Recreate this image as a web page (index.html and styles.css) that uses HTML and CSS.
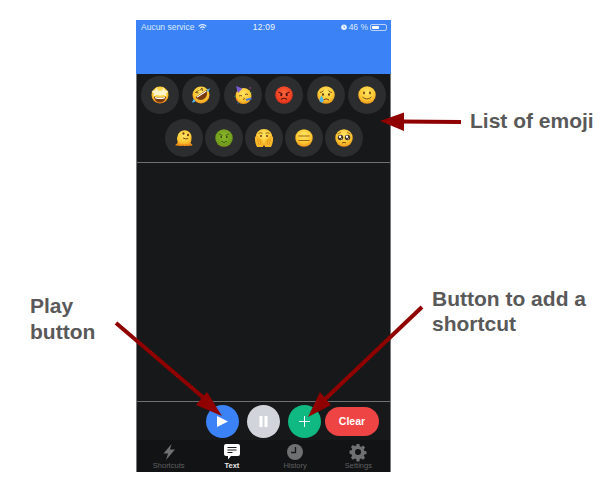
FILE: index.html
```html
<!DOCTYPE html>
<html lang="en">
<head>
<meta charset="utf-8">
<title>Emoji shortcuts</title>
<link rel="stylesheet" href="styles.css">
</head>
<body>
<svg class="defs" aria-hidden="true">
  <defs>
    <radialGradient id="gold" cx="50%" cy="35%" r="70%"><stop offset="0" stop-color="#ffe565"/><stop offset=".6" stop-color="#fdc834"/><stop offset="1" stop-color="#f08c14"/></radialGradient>
    <radialGradient id="red" cx="50%" cy="40%" r="65%"><stop offset="0" stop-color="#f9673a"/><stop offset=".7" stop-color="#ee3f22"/><stop offset="1" stop-color="#d62a12"/></radialGradient>
    <radialGradient id="green" cx="50%" cy="40%" r="65%"><stop offset="0" stop-color="#8db52b"/><stop offset=".8" stop-color="#6f9c1d"/><stop offset="1" stop-color="#b29a1e"/></radialGradient>
    <symbol id="starstruck" viewBox="0 0 36 36">
      <circle cx="18" cy="18" r="17" fill="url(#gold)"/>
      <path d="M1 10 8 9l3-6 3 6 4 1 4-1 3-6 3 6 7 1-5 5 1 6-6-3-7 1-7-1-6 3 1-6z" fill="#fff3c8"/>
      <path d="M6 21c7 3 17 3 24 0-1 8-6 12-12 12S7 29 6 21z" fill="#7a3a10"/>
      <path d="M8 22c6 2 14 2 20 0l-.6 3c-6 1.500-13 1.500-18.800 0z" fill="#fff"/>
    </symbol>
    <symbol id="rofl" viewBox="0 0 36 36">
      <circle cx="18" cy="18" r="17" fill="url(#gold)"/>
      <path d="M7 22 29 8c3 7 0 15-5 18s-13 3-17-4z" fill="#7a3a10"/>
      <path d="M9 21.500 28 9.500l.8 2.200-18 11.300z" fill="#fff"/>
      <path d="m7 13 6-4M7 13l6 1M20 4l1 6M20 4l-4 5" stroke="#6a3a10" stroke-width="1.800" fill="none"/>
      <path d="M29 7q5-1 7-3-1 5-4 8zM3 26q-2 4-3 7 5 0 7-3z" fill="#54b6ee"/>
    </symbol>
    <symbol id="party" viewBox="0 0 36 36">
      <circle cx="19" cy="20" r="16" fill="url(#gold)"/>
      <path d="M4 0l13 5-9 9z" fill="#7c5cd6"/>
      <path d="M10 20q3-2 6 0M22 17q3-2 6 0" stroke="#6a3a10" stroke-width="1.800" fill="none"/>
      <path d="M18 27q3 0 3-1.500T19 24" stroke="#6a3a10" stroke-width="1.500" fill="none"/>
      <path d="m23 26 12-3 0 4-10 3z" fill="#4778d8"/>
      <circle cx="5" cy="28" r="1.500" fill="#d83a55"/><circle cx="8" cy="34" r="1.300" fill="#3f7de0"/><circle cx="32" cy="4" r="1.500" fill="#c73fb0"/><circle cx="34" cy="13" r="1.200" fill="#4aa84a"/><circle cx="2" cy="21" r="1.200" fill="#4aa84a"/>
    </symbol>
    <symbol id="angry" viewBox="0 0 36 36">
      <circle cx="18" cy="18" r="17.500" fill="url(#red)"/>
      <path d="m7 12 8 4M29 12l-8 4" stroke="#5b1608" stroke-width="2.400"/>
      <ellipse cx="12.500" cy="18" rx="2" ry="2.400" fill="#4a1208"/><ellipse cx="23.500" cy="18" rx="2" ry="2.400" fill="#4a1208"/>
      <path d="M12 27q6-5 12 0" stroke="#5b1608" stroke-width="2.200" fill="none"/>
    </symbol>
    <symbol id="cry" viewBox="0 0 36 36">
      <circle cx="18" cy="18" r="17.500" fill="url(#gold)"/>
      <path d="M6 13q4 0 7-4M30 13q-4 0-7-4" stroke="#7a4a10" stroke-width="1.800" fill="none"/>
      <ellipse cx="12" cy="17" rx="2" ry="2.400" fill="#5a3210"/><ellipse cx="24" cy="17" rx="2" ry="2.400" fill="#5a3210"/>
      <path d="M13 28q5-5 11 0" stroke="#6a3a10" stroke-width="2" fill="none"/>
      <path d="M9 19q-4 7-4 10a4 4 0 0 0 8 0q0-3-4-10z" fill="#4fb4e8"/>
    </symbol>
    <symbol id="smile" viewBox="0 0 36 36">
      <circle cx="18" cy="18" r="17.500" fill="url(#gold)"/>
      <ellipse cx="12" cy="14" rx="2" ry="2.800" fill="#7a4a10"/><ellipse cx="24" cy="14" rx="2" ry="2.800" fill="#7a4a10"/>
      <path d="M9 22q9 8 18 0" stroke="#7a4a10" stroke-width="1.800" fill="none"/>
    </symbol>
    <symbol id="melt" viewBox="0 0 36 36">
      <path d="M5 15a14 14 0 1 1 28 3c0 5-1 8-2 10l4 4q0 2-6 1-3 2-6 0-3 2-7 0l-3 1-11-1q-3 0 1-3 3-2 2-6-2-4 0-9z" fill="url(#gold)"/>
      <ellipse cx="17" cy="9" rx="2" ry="2.400" fill="#6a3a10"/><ellipse cx="26" cy="12" rx="2" ry="2.400" fill="#6a3a10"/>
      <path d="M16 18q5 3 10 1" stroke="#6a3a10" stroke-width="1.800" fill="none"/>
      <path d="M4 30q11 3 28 1" stroke="#f28a16" stroke-width="1.600" fill="none"/>
    </symbol>
    <symbol id="sick" viewBox="0 0 36 36">
      <circle cx="18" cy="18" r="17.500" fill="url(#green)"/>
      <path d="m8 10 7 3M28 10l-7 3" stroke="#3f5c10" stroke-width="1.800"/>
      <ellipse cx="12.500" cy="16" rx="1.800" ry="2.200" fill="#33480c"/><ellipse cx="23.500" cy="16" rx="1.800" ry="2.200" fill="#33480c"/>
      <path d="M12 26q2-3 4 0t4 0 4 0" stroke="#3f5c10" stroke-width="1.800" fill="none"/>
    </symbol>
    <symbol id="hands" viewBox="0 0 36 36">
      <circle cx="18" cy="17" r="17" fill="url(#gold)"/>
      <path d="M7 9q4-3 8 0M21 9q4-3 8 0" stroke="#8a5a14" stroke-width="1.800" fill="none"/>
      <ellipse cx="12" cy="14" rx="2" ry="2.200" fill="#6a3a10"/><ellipse cx="24" cy="14" rx="2" ry="2.200" fill="#6a3a10"/>
      <path d="M0 16q5-4 8 0l8 8v12H4q-5-9-4-20zM36 16q-5-4-8 0l-8 8v12h12q5-9 4-20z" fill="#f8b92c"/>
      <path d="M5 20l3 12M10 21l2 11M31 20l-3 12M26 21l-2 11" stroke="#d98a14" stroke-width="1.300" fill="none"/>
    </symbol>
    <symbol id="blank" viewBox="0 0 36 36">
      <circle cx="18" cy="18" r="17.500" fill="url(#gold)"/>
      <path d="M7 14h22M7 23h22" stroke="#9a6414" stroke-width="2.200"/>
    </symbol>
    <symbol id="plead" viewBox="0 0 36 36">
      <circle cx="18" cy="18" r="17.500" fill="url(#gold)"/>
      <path d="M5 10q4-1 7-4M31 10q-4-1-7-4" stroke="#8a5a14" stroke-width="1.600" fill="none"/>
      <circle cx="11" cy="17" r="5.500" fill="#4a3424"/><circle cx="25" cy="17" r="5.500" fill="#4a3424"/>
      <circle cx="10" cy="15.500" r="2.400" fill="#fff"/><circle cx="24" cy="15.500" r="2.400" fill="#fff"/>
      <circle cx="13" cy="19.500" r="1.200" fill="#d8d8d8"/><circle cx="27" cy="19.500" r="1.200" fill="#d8d8d8"/>
      <path d="M14 28q4-3 8 0" stroke="#6a3a10" stroke-width="1.800" fill="none"/>
    </symbol>
  </defs>
</svg>

<main class="stage">
  <section class="phone">
    <header class="header">
      <div class="status">
        <div class="status-side">
          <span>Aucun service</span>
          <svg class="wifi" viewBox="0 0 10 7"><path d="M0 2.200a7 7 0 0 1 10 0L9 3.200a5.600 5.600 0 0 0-8 0zM2 4.200a4.200 4.200 0 0 1 6 0L7 5.200a2.800 2.800 0 0 0-4 0zM3.800 6a1.700 1.700 0 0 1 2.400 0L5 7z"/></svg>
        </div>
        <div class="status-time">12:09</div>
        <div class="status-side status-right">
          <svg class="alarm" viewBox="0 0 8 8"><circle cx="4" cy="4.300" r="3.700"/><path d="M4 2v2.300l1.500.8" stroke="#3b82f6" stroke-width=".8" fill="none"/></svg>
          <span>46 %</span>
          <span class="battery"><span class="battery-level"></span></span>
        </div>
      </div>
    </header>

    <div class="emoji-list">
      <div class="emoji-row emoji-row-wide">
        <div class="emoji-chip"><svg class="emoji"><use href="#starstruck"/></svg></div>
        <div class="emoji-chip"><svg class="emoji"><use href="#rofl"/></svg></div>
        <div class="emoji-chip"><svg class="emoji"><use href="#party"/></svg></div>
        <div class="emoji-chip"><svg class="emoji"><use href="#angry"/></svg></div>
        <div class="emoji-chip"><svg class="emoji"><use href="#cry"/></svg></div>
        <div class="emoji-chip"><svg class="emoji"><use href="#smile"/></svg></div>
      </div>
      <div class="emoji-row">
        <div class="emoji-chip"><svg class="emoji"><use href="#melt"/></svg></div>
        <div class="emoji-chip"><svg class="emoji"><use href="#sick"/></svg></div>
        <div class="emoji-chip"><svg class="emoji"><use href="#hands"/></svg></div>
        <div class="emoji-chip"><svg class="emoji"><use href="#blank"/></svg></div>
        <div class="emoji-chip"><svg class="emoji"><use href="#plead"/></svg></div>
      </div>
    </div>

    <div class="text-area"></div>

    <div class="controls">
      <div class="round-buttons">
        <button class="round round-play"><svg class="glyph" viewBox="0 0 11 11"><path d="M0 0l11 5.500L0 11z"/></svg></button>
        <button class="round round-pause"><svg class="glyph" viewBox="0 0 11 11"><path d="M1.500 0h3v11h-3zM6.500 0h3v11h-3z"/></svg></button>
        <button class="round round-add"><svg class="glyph" viewBox="0 0 11 11"><path d="M5 0h1v5h5v1H6v5H5V6H0V5h5z"/></svg></button>
      </div>
      <button class="clear">Clear</button>
    </div>

    <nav class="tabs">
      <div class="tab">
        <svg class="tab-icon" viewBox="0 0 16 16"><path d="M10.500 0 2.500 9.500h4.500L5 16l9-10.500H9z"/></svg>
        <span>Shortcuts</span>
      </div>
      <div class="tab tab-active">
        <svg class="tab-icon" viewBox="0 0 16 16"><path d="M2 0h12q2 0 2 2v8q0 2-2 2H7l-3 3.500V12H2q-2 0-2-2V2q0-2 2-2z"/><path d="M3.500 3.500h9M3.500 6h9M3.500 8.500h5" stroke="#17181a" stroke-width="1.100"/></svg>
        <span>Text</span>
      </div>
      <div class="tab">
        <svg class="tab-icon" viewBox="0 0 16 16"><circle cx="8" cy="8" r="8"/><path d="M8.500 3v5.500H4" stroke="#17181a" stroke-width="1.300" fill="none"/></svg>
        <span>History</span>
      </div>
      <div class="tab">
        <svg class="tab-icon" viewBox="0 0 16 16"><path d="M6.600 0h2.800l.4 2.300 1.300.6 2-1.300 2 2-1.300 2 .6 1.300 2.100.4v2.800l-2.100.4-.6 1.300 1.300 2-2 2-2-1.300-1.300.6-.4 2.300H6.600l-.4-2.300-1.300-.6-2 1.300-2-2 1.300-2-.6-1.300L-.5 9.400V6.600l2.100-.4.600-1.300-1.300-2 2-2 2 1.300 1.300-.6zM8 5a3 3 0 1 0 0 6 3 3 0 0 0 0-6z" fill-rule="evenodd"/></svg>
        <span>Settings</span>
      </div>
    </nav>
  </section>

  <p class="note note-list">List of emoji</p>
  <p class="note note-play">Play<br>button</p>
  <p class="note note-add">Button to add a<br>shortcut</p>

  <svg class="arrows" viewBox="0 0 604 484" aria-hidden="true">
    <path class="arrow-line" d="M461 122 400 121.500"/>
    <path class="arrow-head" d="M380 121 404 112.500 404 131z"/>
    <path class="arrow-line" d="M116 323 212 405"/>
    <path class="arrow-head" d="M222 416 196 405 207 392z"/>
    <path class="arrow-line" d="M422 307 320 404"/>
    <path class="arrow-head" d="M308 417 320 392 331 405z"/>
  </svg>
</main>
</body>
</html>
```

FILE: styles.css
```css
* { box-sizing: border-box; }

html, body {
  margin: 0;
  padding: 0;
  background: #fff;
}

.defs {
  position: absolute;
  width: 0;
  height: 0;
}

.stage {
  position: relative;
  width: 604px;
  height: 484px;
  overflow: hidden;
  font-family: "Liberation Sans", Arial, sans-serif;
}

.phone {
  position: absolute;
  left: 136px;
  top: 20px;
  width: 255px;
  height: 452px;
  display: flex;
  flex-direction: column;
  background: #17181a;
  border-left: 1px solid #77787a;
  border-right: 1px solid #77787a;
}

.header {
  height: 54px;
  flex: none;
  background: #3b82f6;
  margin: 0 -1px;
}

.status {
  height: 14px;
  padding: 0 4px 0 5px;
  display: grid;
  grid-template-columns: 1fr auto 1fr;
  align-items: center;
  color: #dbe8fd;
  font-size: 8.500px;
}

.status-side {
  display: flex;
  align-items: center;
  gap: 4px;
}

.status-right {
  justify-content: flex-end;
  gap: 2px;
}

.status-time {
  font-size: 8.500px;
  letter-spacing: .2px;
  color: #eef4ff;
}

.wifi {
  width: 9px;
  height: 6px;
  fill: #eef4ff;
}

.alarm {
  width: 6px;
  height: 6px;
  fill: #eef4ff;
}

.battery {
  width: 17px;
  height: 7px;
  padding: 1px;
  border: 1px solid #b8d0fa;
  border-radius: 2px;
  display: block;
}

.battery-level {
  display: block;
  width: 7px;
  height: 100%;
  background: #fff;
  border-radius: 1px;
}

.emoji-list {
  flex: none;
  height: 89px;
  padding-top: 2px;
  display: flex;
  flex-direction: column;
  gap: 5px;
  border-bottom: 1px solid #6f7072;
}

.emoji-row {
  display: flex;
  justify-content: center;
  gap: 2px;
}

.emoji-row-wide {
  gap: 3.500px;
}

.emoji-chip {
  width: 38px;
  height: 38px;
  border-radius: 50%;
  background: #2c2d2e;
  display: flex;
  align-items: center;
  justify-content: center;
}

.emoji {
  width: 18px;
  height: 18px;
}

.text-area {
  flex: 1;
}

.controls {
  flex: none;
  height: 39px;
  padding: 0 11px 0 0;
  display: flex;
  align-items: center;
  justify-content: flex-end;
  gap: 4px;
  border-top: 1px solid #6f7072;
}

.round-buttons {
  display: flex;
  gap: 8px;
}

.round {
  width: 33px;
  height: 33px;
  padding: 0;
  border: 0;
  border-radius: 50%;
  display: flex;
  align-items: center;
  justify-content: center;
}

.round-play { background: #3b82f6; }
.round-pause { background: #d1d5db; }
.round-add { background: #10b981; }

.glyph {
  width: 11px;
  height: 11px;
  fill: #fff;
}

.clear {
  width: 54px;
  height: 29px;
  padding: 0;
  border: 0;
  border-radius: 15px;
  background: #ef4444;
  color: #fff;
  font: bold 10.500px "Liberation Sans", Arial, sans-serif;
}

.tabs {
  flex: none;
  height: 32px;
  display: grid;
  grid-template-columns: repeat(4, 1fr);
  background: #121314;
}

.tab {
  padding-top: 4px;
  display: flex;
  flex-direction: column;
  align-items: center;
  gap: 2px;
  color: #5f6062;
  font-size: 7.500px;
  line-height: 8px;
}

.tab-active {
  color: #e8e8e8;
  font-weight: bold;
}

.tab-icon {
  width: 16px;
  height: 16px;
  flex: none;
  fill: #6f7072;
  overflow: visible;
}

.tab-active .tab-icon {
  fill: #fff;
}

.note {
  position: absolute;
  margin: 0;
  color: #595959;
  font-size: 21px;
  font-weight: bold;
  line-height: 26px;
  white-space: nowrap;
}

.note-list { left: 470px; top: 108px; }
.note-play { left: 30px; top: 293px; }
.note-add { left: 432px; top: 286px; line-height: 25px; }

.arrows {
  position: absolute;
  left: 0;
  top: 0;
  width: 604px;
  height: 484px;
  pointer-events: none;
}

.arrow-line {
  stroke: #8f0000;
  stroke-width: 4;
  fill: none;
}

.arrow-head {
  fill: #8f0000;
}
```
